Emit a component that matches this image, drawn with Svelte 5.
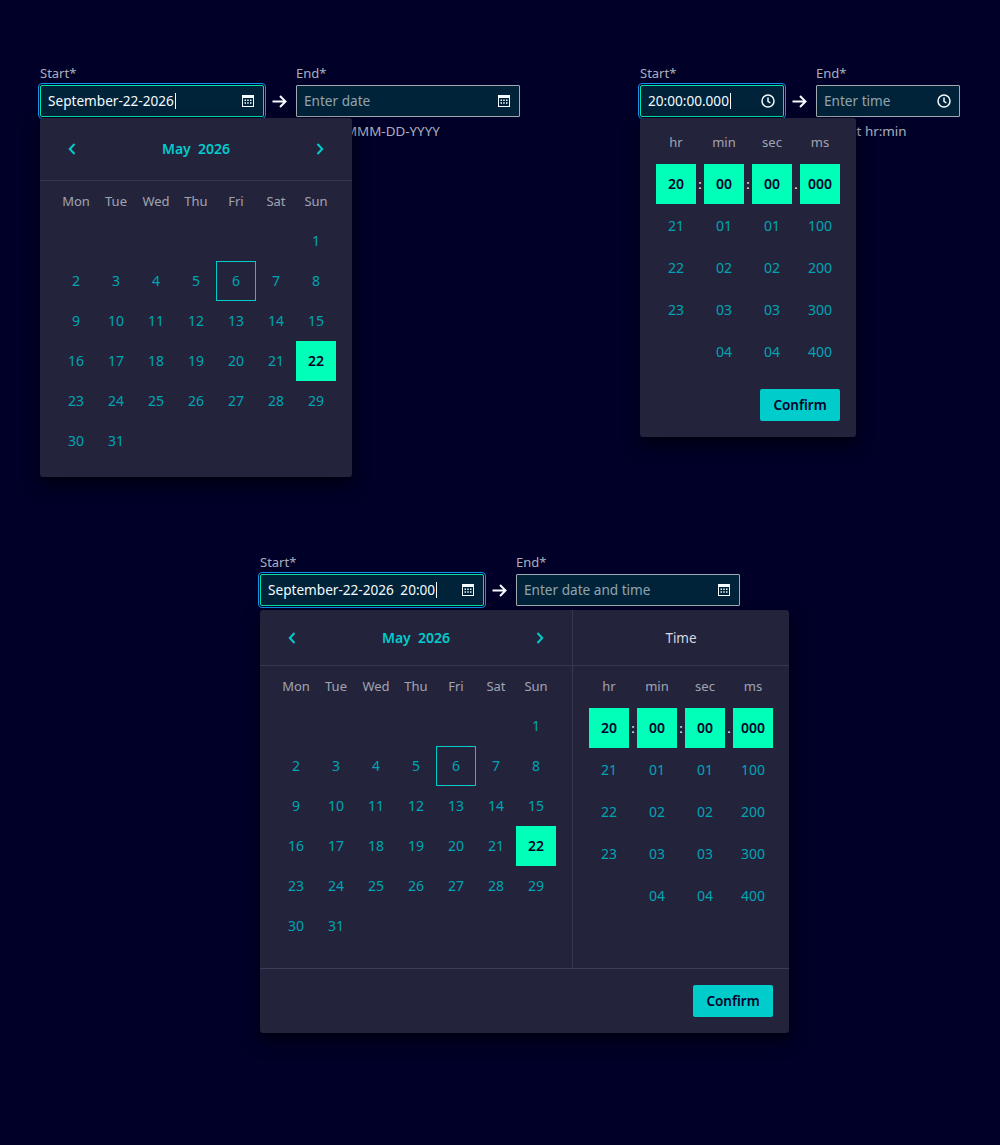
<script lang="ts">
    const dayNames: string[] = ['Mon', 'Tue', 'Wed', 'Thu', 'Fri', 'Sat', 'Sun'];
    const leading: number = 6;
    const cells: (number | null)[] = [
        ...Array(leading).fill(null),
        ...Array.from({ length: 31 }, (_, i) => i + 1)
    ];
    const units: string[] = ['hr', 'min', 'sec', 'ms'];
    const timeRows: string[][] = [
        ['20', '00', '00', '000'],
        ['21', '01', '01', '100'],
        ['22', '02', '02', '200'],
        ['23', '03', '03', '300'],
        ['', '04', '04', '400']
    ];
    const seps: string[] = [':', ':', '.', ''];
</script>

{#snippet calIcon()}
    <svg class="icon" viewBox="0 0 12 12" width="12" height="12">
        <path fill="#f5fcff" fill-rule="evenodd" d="M0 0h12v12H0z M1 3v8h10V3z" />
        <path fill="#f5fcff" d="M2.500 4.500h1.500v1.500H2.500z M5.200 4.500h1.500v1.500H5.200z M8 4.500h1.500v1.500H8z M2.500 7.200h1.500v1.500H2.500z M5.200 7.200h1.500v1.500H5.200z M8 7.200h1.500v1.500H8z" />
    </svg>
{/snippet}

{#snippet clockIcon()}
    <svg class="icon clock-icon" viewBox="0 0 14 14" width="14" height="14" fill="none" stroke="#f5fcff" stroke-width="1.500">
        <circle cx="7" cy="7" r="6" />
        <path d="M7 3.500V7.400L9.400 9" />
    </svg>
{/snippet}

{#snippet arrow()}
    <svg class="arrow" viewBox="0 0 15 13" width="15" height="13" fill="none" stroke="#f5fcff" stroke-width="2">
        <path d="M0.500 6.500h13M8 1l5.500 5.500L8 12" />
    </svg>
{/snippet}

{#snippet calendar()}
    <div class="cal">
        <div class="cal-head">
            <svg class="chev" viewBox="0 0 8 12" width="8" height="12" fill="none" stroke="#00cccc" stroke-width="2"><path d="M6.500 1 1.800 6l4.700 5" /></svg>
            <span class="month">May&nbsp; 2026</span>
            <svg class="chev" viewBox="0 0 8 12" width="8" height="12" fill="none" stroke="#00cccc" stroke-width="2"><path d="M1.500 1l4.700 5-4.700 5" /></svg>
        </div>
        <div class="days">
            {#each dayNames as d}
                <div class="dayname">{d}</div>
            {/each}
            {#each cells as c}
                <div class="day" class:today={c === 6} class:sel={c === 22}>{c ?? ''}</div>
            {/each}
        </div>
    </div>
{/snippet}

{#snippet clock()}
    <div class="clock">
        <div class="time-row">
            {#each units as u}
                <div class="unit">{u}</div>
                <span class="sep"></span>
            {/each}
        </div>
        {#each timeRows as row, r}
            <div class="time-row">
                {#each row as v, i}
                    <div class="tcell" class:sel={r === 0}>{v}</div>
                    <span class="sep">{r === 0 ? seps[i] : ''}</span>
                {/each}
            </div>
        {/each}
    </div>
{/snippet}

{#snippet range(size: string, startValue: string, endHint: string, help: string, icon: any)}
    <div class="range {size}">
        <div>
            <div class="label">Start*</div>
            <div class="field focus">
                <span class="val">{startValue}</span><span class="caret"></span>
                {@render icon()}
            </div>
        </div>
        <div class="arrow-box">{@render arrow()}</div>
        <div>
            <div class="label">End*</div>
            <div class="field">
                <span class="hint">{endHint}</span>
                {@render icon()}
            </div>
            {#if help}<div class="help">{help}</div>{/if}
        </div>
    </div>
{/snippet}

<div class="page">
    <div class="row top">
        <div class="group">
            {@render range('wide', 'September-22-2026', 'Enter date', 'Format MMM-DD-YYYY', calIcon)}
            <div class="popup pop-date">
                {@render calendar()}
            </div>
        </div>
        <div class="group">
            {@render range('narrow', '20:00:00.000', 'Enter time', 'Format hr:min', clockIcon)}
            <div class="popup pop-time">
                {@render clock()}
                <div class="foot"><button class="confirm">Confirm</button></div>
            </div>
        </div>
    </div>
    <div class="row bottom">
        <div class="group">
            {@render range('wide', 'September-22-2026 20:00', 'Enter date and time', '', calIcon)}
            <div class="popup pop-both">
                <div class="both-main">
                    {@render calendar()}
                    <div class="both-time">
                        <div class="time-title">Time</div>
                        {@render clock()}
                    </div>
                </div>
                <div class="both-foot"><button class="confirm">Confirm</button></div>
            </div>
        </div>
    </div>
</div>

<style>
    :global(body) {
        background: #000028;
    }
    .page {
        min-height: 1145px;
        box-sizing: border-box;
        padding-top: 64px;
        font-family: "Noto Sans", "Open Sans", sans-serif;
        font-size: 13.6px;
        color: #f5fcff;
    }
    .row {
        display: flex;
    }
    .top {
        justify-content: space-between;
        padding: 0 40px;
        height: 489px;
    }
    .bottom {
        justify-content: center;
    }
    .group {
        position: relative;
    }
    .range {
        display: flex;
    }
    .label {
        font-size: 13px;
        line-height: 18px;
        margin-bottom: 3px;
        color: rgba(245, 252, 255, 0.7);
    }
    .field {
        box-sizing: border-box;
        height: 32px;
        display: flex;
        align-items: center;
        padding: 0 9px 0 7px;
        background: #00233a;
        border: 1px solid #a3a9b0;
        border-radius: 1px;
        position: relative;
    }
    .wide .field {
        width: 224px;
    }
    .narrow .field {
        width: 144px;
    }
    .field.focus {
        border-color: #00e5a6;
        outline: 1px solid #1491eb;
        outline-offset: 1px;
        border-radius: 2px;
    }
    .val {
        white-space: nowrap;
        word-spacing: 3px;
        padding-bottom: 2px;
    }
    .caret {
        width: 1px;
        height: 16px;
        background: #f5fcff;
        margin-left: 1px;
    }
    .hint {
        color: rgba(245, 252, 255, 0.6);
        white-space: nowrap;
        padding-bottom: 2px;
    }
    .icon {
        margin-left: auto;
        flex: none;
    }
    .clock-icon {
        margin-right: -1px;
    }
    .arrow-box {
        box-sizing: border-box;
        width: 32px;
        height: 32px;
        margin-top: 21px;
        padding-right: 1px;
        display: flex;
        align-items: center;
        justify-content: center;
    }
    .help {
        margin-top: 6px;
        line-height: 16px;
        font-size: 13.4px;
        color: rgba(245, 252, 255, 0.7);
        white-space: nowrap;
    }
    .popup {
        position: absolute;
        left: 0;
        background: #23233c;
        border-radius: 3px;
        box-shadow: 0 8px 16px rgba(0, 0, 0, 0.6);
    }
    .pop-date {
        top: 54px;
        width: 312px;
    }
    .pop-time {
        top: 54px;
        width: 216px;
        padding-top: 4px;
    }
    .pop-both {
        top: 57px;
        width: 529px;
    }
    .cal {
        width: 312px;
    }
    .cal-head {
        box-sizing: border-box;
        height: 63px;
        display: flex;
        align-items: center;
        justify-content: space-between;
        padding: 0 28px;
        border-bottom: 1px solid #37374f;
    }
    .month {
        font-size: 14px;
        font-weight: 600;
        color: #00cccc;
        padding-bottom: 1px;
    }
    .days {
        display: grid;
        grid-template-columns: repeat(7, 40px);
        grid-auto-rows: 40px;
        padding: 0 16px 16px;
    }
    .dayname, .unit {
        display: flex;
        align-items: center;
        justify-content: center;
        color: rgba(245, 252, 255, 0.6);
        font-size: 13px;
    }
    .day, .tcell {
        display: flex;
        align-items: center;
        justify-content: center;
        color: #00a5b4;
        font-size: 14px;
        box-sizing: border-box;
        padding-bottom: 2px;
    }
    .day.today {
        border: 1px solid #00cccc;
    }
    .sel {
        background: #00ffb9;
        color: #000028 !important;
        font-weight: 600;
    }
    .clock {
        padding: 0 16px;
    }
    .time-row {
        display: flex;
        height: 40px;
        margin-bottom: 2px;
    }
    .unit, .tcell {
        width: 40px;
    }
    .sep {
        width: 8px;
        display: flex;
        align-items: center;
        justify-content: center;
        font-size: 13px;
    }
    .time-row .sep:last-child {
        display: none;
    }
    .foot {
        display: flex;
        justify-content: flex-end;
        padding: 15px 16px 16px;
    }
    .confirm {
        width: 80px;
        height: 32px;
        border: none;
        border-radius: 2px;
        background: #00cccc;
        color: #000028;
        padding: 0;
        font: 600 13.500px "Noto Sans", "Open Sans", sans-serif;
    }
    .both-main {
        display: flex;
        height: 358px;
    }
    .both-main .cal-head {
        height: 56px;
    }
    .both-time {
        flex: 1;
        border-left: 1px solid #37374f;
    }
    .time-title {
        box-sizing: border-box;
        height: 56px;
        display: flex;
        align-items: center;
        justify-content: center;
        font-size: 13.500px;
        color: rgba(245, 252, 255, 0.85);
        border-bottom: 1px solid #37374f;
    }
    .both-foot {
        display: flex;
        justify-content: flex-end;
        padding: 16px;
        border-top: 1px solid #3c3c5a;
    }
</style>
